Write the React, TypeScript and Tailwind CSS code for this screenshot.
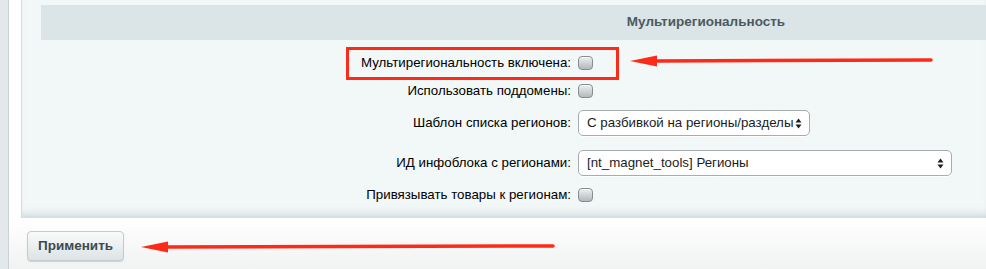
import type { ReactNode } from 'react';

function Checkbox() {
  return (
    <span className="block w-[15px] h-[14px] rounded-[4px] border border-[#8a8d90] bg-linear-to-b from-[#eef0f1] to-[#b4b8bb] shadow-[inset_0_1px_0_rgba(255,255,255,0.7)]" />
  );
}

function UpDown() {
  return (
    <svg width="7" height="11" viewBox="0 0 7 11" className="shrink-0">
      <path d="M3.5 0.5 L6.5 4.5 L0.5 4.5 Z" fill="#1f1f1f" />
      <path d="M3.5 10.5 L6.5 6.5 L0.5 6.5 Z" fill="#1f1f1f" />
    </svg>
  );
}

function Select({ value, width }: { value: string; width: string }) {
  return (
    <div
      className={`${width} h-[26px] flex items-center justify-between pl-[8px] pr-[7px] bg-white border border-[#a6acaf] rounded-[5px] text-[13.3px] text-[#1c1c1c] shadow-[0_1px_0_rgba(255,255,255,0.8)]`}
    >
      <span className="truncate">{value}</span>
      <UpDown />
    </div>
  );
}

function Row({ label, height, top, children }: { label: string; height: string; top: string; children: ReactNode }) {
  return (
    <div className={`grid grid-cols-[530px_1fr] gap-x-[7px] items-center ${height} ${top}`}>
      <div className="text-right text-[13.3px] text-black">{label}</div>
      <div className="flex items-center">{children}</div>
    </div>
  );
}

export default function App() {
  return (
    <div className="relative w-[986px] h-[269px] overflow-hidden flex font-['Liberation_Sans',Arial,sans-serif]">
      {/* left strip */}
      <div className="w-[9px] h-full bg-[#e2e8eb] border-r border-[#c9d1d5]" />

      <div className="flex-1 flex flex-col bg-white">
        <div className="flex h-[218px]">
          <div className="w-[12px] bg-white" />
          <div className="flex-1 flex flex-col border-l border-[#d2dde2] bg-[#f2f7f7] pt-[5px] pl-[19px] shadow-[inset_0_-9px_8px_-6px_rgba(150,170,180,0.45)]">
            <div className="h-[35px] bg-[#dbe4e6] flex items-center justify-center pl-[385px] text-[13.5px] font-bold text-[#4b5a5f]">
              Мультирегиональность
            </div>

            <Row label="Мультирегиональность включена:" height="h-[22px]" top="mt-[12px]">
              <Checkbox />
            </Row>
            <Row label="Использовать поддомены:" height="h-[22px]" top="mt-[6px]">
              <Checkbox />
            </Row>
            <Row label="Шаблон списка регионов:" height="h-[26px]" top="mt-[8px]">
              <Select value="С разбивкой на регионы/разделы" width="w-[232px]" />
            </Row>
            <Row label="ИД инфоблока с регионами:" height="h-[26px]" top="mt-[14px]">
              <Select value="[nt_magnet_tools] Регионы" width="w-[374px]" />
            </Row>
            <Row label="Привязывать товары к регионам:" height="h-[22px]" top="mt-[8px]">
              <Checkbox />
            </Row>
          </div>
        </div>

        {/* footer */}
        <div className="flex-1 bg-linear-to-b from-white to-[#f1f2f2] pl-[18px] pt-[13px]">
          <button className="w-[97px] h-[30px] rounded-[4px] border border-[#c3cbce] bg-linear-to-b from-[#f8fafa] to-[#dce4e6] shadow-[0_1px_1px_rgba(0,0,0,0.15)] text-[13.5px] font-bold text-[#3d4a4e]">
            Применить
          </button>
        </div>
      </div>

      {/* annotations */}
      <div className="absolute left-[346px] top-[47px] w-[273px] h-[33px] border-[3px] border-[#fd2a18]" />
      <svg className="absolute left-0 top-0" width="986" height="269">
        <path d="M655 61 L931 60" stroke="#fd2a18" strokeWidth="3.5" strokeLinecap="round" />
        <path d="M630 61 L657 55.5 L657 66.5 Z" fill="#fd2a18" />
        <path d="M166 247 L553 246" stroke="#fd2a18" strokeWidth="3.5" strokeLinecap="round" />
        <path d="M141 247 L168 241.5 L168 252.5 Z" fill="#fd2a18" />
      </svg>
    </div>
  );
}
